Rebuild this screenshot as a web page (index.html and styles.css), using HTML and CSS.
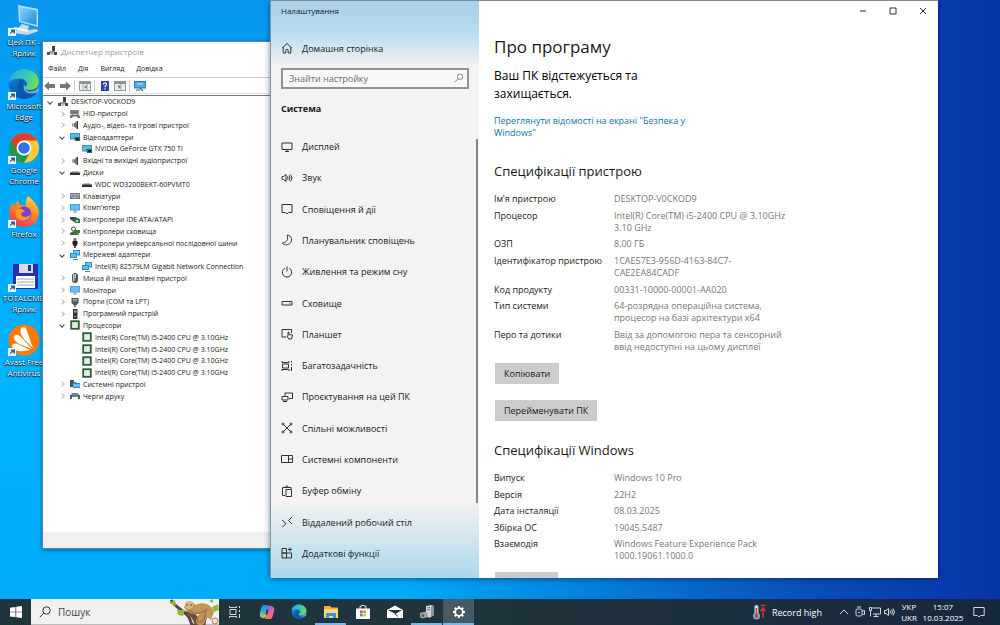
FILE: index.html
```
<!DOCTYPE html>
<html lang="uk">
<head>
<meta charset="utf-8">
<title>Налаштування</title>
<link rel="stylesheet" href="styles.css">
</head>
<body>
<svg class="sprite" aria-hidden="true">
  <defs>
    <linearGradient id="edge-a" x1="0" y1="0" x2="1" y2="0.3"><stop offset="0" stop-color="#2aa8e8"/><stop offset="0.6" stop-color="#35c5c0"/><stop offset="1" stop-color="#6adf5a"/></linearGradient>
    <linearGradient id="edge-b" x1="0" y1="0" x2="0.4" y2="1"><stop offset="0" stop-color="#1d8fe0"/><stop offset="1" stop-color="#0c4da5"/></linearGradient>
    <linearGradient id="fox" x1="0.8" y1="0" x2="0.3" y2="1"><stop offset="0" stop-color="#ffe04a"/><stop offset="0.45" stop-color="#ff8a1f"/><stop offset="1" stop-color="#f2315c"/></linearGradient>
    <linearGradient id="screen" x1="0" y1="0" x2="1" y2="1"><stop offset="0" stop-color="#8fd6ff"/><stop offset="1" stop-color="#1c88d8"/></linearGradient>
    <linearGradient id="cop-a" x1="0" y1="0" x2="0" y2="1"><stop offset="0" stop-color="#2a7cf0"/><stop offset="0.5" stop-color="#2fb8c8"/><stop offset="1" stop-color="#e6c22e"/></linearGradient>
    <linearGradient id="cop-b" x1="0" y1="0" x2="0" y2="1"><stop offset="0" stop-color="#a060f0"/><stop offset="0.5" stop-color="#ee5fa8"/><stop offset="1" stop-color="#f7803a"/></linearGradient>
  </defs>
  <symbol id="edge" viewBox="0 0 32 32">
    <circle cx="16" cy="16" r="15" fill="url(#edge-b)"/>
    <path d="M1 14C2 6 8 1 16 1c9 0 15 6 15 13 0 5-4 8-9 8-3 0-5-1-4-3 2-3 1-7-4-8C8 10 3 12 1 14z" fill="url(#edge-a)"/>
    <path d="M11 13c-3 5-1 13 6 16 5 2 10-1 12-5-8 4-16-1-14-8 0-2 1-3 1-4-2-1-4-1-5 1z" fill="#0c57ae"/>
    <path d="M18 19c-1 3 2 5 6 4 3 0 5-2 7-5l-1 6c-8 4-16 0-14-7z" fill="#e8f6ff" opacity="0.5"/>
  </symbol>
  <symbol id="shortcut" viewBox="0 0 8 8"><rect width="8" height="8" fill="#f4f8fc"/><path d="M2 6.800C1.800 4.500 3 3.200 4.600 3.100H3V1.400h4v4H5.600V4.200C4 4.300 3 5.200 2 6.800z" fill="#1c5fae"/></symbol>
  <symbol id="t-pc" viewBox="0 0 10 10"><rect x="5" y="0" width="3" height="6" fill="#444"/><path d="M2 5h6v2H2z" fill="#999"/><rect x="0" y="6" width="3" height="3" fill="#555"/><rect x="3.500" y="7" width="3" height="2" fill="#bbb"/><rect x="7" y="6" width="3" height="3" fill="#444"/></symbol>
  <symbol id="t-hid" viewBox="0 0 10 10"><rect y="1" width="9" height="4" fill="#8a8f96"/><path d="M1 2h7M1 3.500h7" stroke="#555" stroke-width=".6"/><path d="M0 9c0-5 4-4 5-3 1-1 5-2 5 3H8L7 7.500H3L2 9z" fill="#656a72"/></symbol>
  <symbol id="t-aud" viewBox="0 0 10 10"><path d="M2 3.500h2L7 1v8L4 6.500H2z" fill="#777"/><path d="M7 1h1v8H7z" fill="#333"/><path d="M3 4v2" stroke="#ddd"/></symbol>
  <symbol id="t-vid" viewBox="0 0 10 10"><rect x="0" y="1" width="10" height="6.500" fill="#3b7fb0"/><rect x=".7" y="1.700" width="8.600" height="5" fill="#53baf0"/><path d="M4 5h6v4H5z" fill="#237a42"/><rect x="6" y="6" width="3" height="2" fill="#123"/></symbol>
  <symbol id="t-disk" viewBox="0 0 10 10"><path d="M2 4h6l2 2H0z" fill="#bbb"/><rect y="5.500" width="10" height="2.500" rx=".5" fill="#333"/></symbol>
  <symbol id="t-kbd" viewBox="0 0 10 10"><rect y="2" width="10" height="6" fill="#747c84"/><path d="M1 3.500h8M1 5h8" stroke="#d3d8dc" stroke-width=".8" stroke-dasharray="1 .4"/><path d="M2.500 6.700h5" stroke="#d3d8dc" stroke-width=".7"/></symbol>
  <symbol id="t-mon" viewBox="0 0 10 10"><rect y="1" width="10" height="6.500" fill="#4795cf"/><rect x=".7" y="1.700" width="8.600" height="5" fill="#63c0fa"/><path d="M3 9h4M5 7v2" stroke="#8a98a5"/></symbol>
  <symbol id="t-ide" viewBox="0 0 10 10"><path d="M0 2h5l5 2v3H4L0 4z" fill="#444"/><path d="M3 4h7v4H5z" fill="#2a7a3f"/><rect x="6" y="5" width="2" height="2" fill="#c8d8c8"/></symbol>
  <symbol id="t-sto" viewBox="0 0 10 10"><circle cx="3.500" cy="3" r="2" fill="none" stroke="#444"/><path d="M0 7c3-2 5-2 7-1v3H0z" fill="#555"/><path d="M5 4h5v3H5z" fill="#2b7b41"/><path d="M2 8h7" stroke="#2b7b41" stroke-width="1.500"/></symbol>
  <symbol id="t-usb" viewBox="0 0 10 10"><rect x="3.500" y="0" width="3" height="3" fill="#777"/><path d="M2.500 3h5v3l-1 2h-3l-1-2z" fill="#222"/><path d="M5 7v3" stroke="#222" stroke-width="1.400"/></symbol>
  <symbol id="t-net" viewBox="0 0 10 10"><rect x="3" y="0" width="7" height="5.500" fill="#2581bd"/><rect x="3.800" y=".8" width="5.400" height="3.800" fill="#68c9ff"/><rect x="0" y="3" width="7" height="5" fill="#2581bd"/><rect x=".8" y="3.800" width="5.400" height="3.400" fill="#54c2f6"/><path d="M3 9.500h5" stroke="#3d9a69"/></symbol>
  <symbol id="t-mouse" viewBox="0 0 10 10"><rect x="2" y="0" width="6" height="10" rx="3" fill="#555"/><rect x="3" y="1" width="1.500" height="7" fill="#ccc"/><path d="M5.500 1v4" stroke="#eee" stroke-width=".7"/></symbol>
  <symbol id="t-port" viewBox="0 0 10 10"><path d="M1.500 1h7v5l-2 2h-3l-2-2z" fill="#555"/><path d="M3 2.500h4M3 4h4" stroke="#ccc" stroke-width=".7"/><path d="M5 8v2" stroke="#333" stroke-width="1.400"/></symbol>
  <symbol id="t-soft" viewBox="0 0 10 10"><rect x="3" y="0" width="4.500" height="10" fill="#333"/><rect x="4" y="1.500" width="2.500" height="2" fill="#aaa"/><rect x="4" y="7" width="2.500" height="1" fill="#4bc46a"/></symbol>
  <symbol id="t-cpu" viewBox="0 0 10 10"><rect x="1.200" y="1.200" width="7.600" height="7.600" fill="#e0eedf" stroke="#2e5c3e" stroke-width="1.800"/></symbol>
  <symbol id="t-sys" viewBox="0 0 10 10"><rect x="0" y="1" width="4" height="7" fill="#455"/><path d="M3 3h3l1 1h3v5H3z" fill="#2e89c9"/><path d="M3 5h7v3H3z" fill="#66bff2"/></symbol>
  <symbol id="t-prn" viewBox="0 0 10 10"><path d="M2 2h6l1 2H1z" fill="#7d858d"/><path d="M0 4h10v4H8V6H2v2H0z" fill="#56606a"/><path d="M2 5h6" stroke="#4c9ad6"/></symbol>
</svg>

<div class="desktop">
  <main class="workspace">
    <ul class="shortcuts">
      <li><span class="pic"><svg viewBox="0 0 32 32"><path d="M10 1l20 4v18l-19-5z" fill="#b8dcf2"/><path d="M11.500 3l17 3.500v14.500l-16-4z" fill="url(#screen)"/><path d="M14 20l7 2-1 4 8-1 3 2-12 4-13-2z" fill="#cfd8de"/><path d="M6 24l14 3" stroke="#f5f8fa" stroke-width="2"/></svg><svg class="arrow"><use href="#shortcut"/></svg></span>Цей ПК -<br>Ярлик</li>
      <li><span class="pic"><svg><use href="#edge"/></svg><svg class="arrow"><use href="#shortcut"/></svg></span>Microsoft<br>Edge</li>
      <li><span class="pic"><svg viewBox="0 0 32 32"><circle cx="16" cy="16" r="15" fill="#fcc934"/><path d="M16 16L3 8.500A15 15 0 0 1 29 8.500H16z" fill="#e33b2e"/><path d="M3 8.500A15 15 0 0 0 16 31l6.500-11.500L16 16z" fill="#23984b"/><path d="M3 8.500L9.500 20 16 9z" fill="#e33b2e"/><path d="M3 8.500l6.500 11L16 23 11 29A15 15 0 0 1 3 8.500z" fill="#23984b"/><circle cx="16" cy="16" r="7.500" fill="#fff"/><circle cx="16" cy="16" r="5.800" fill="#2c75e8"/></svg><svg class="arrow"><use href="#shortcut"/></svg></span>Google<br>Chrome</li>
      <li><span class="pic"><svg viewBox="0 0 32 32"><path d="M20 0c5 4 10 9 11 16 0 9-7 15-15 15S1 25 1 17c0-5 2-8 4-11l1 4 4-6 1 5c3 0 5 0 7 1-1-4 0-7 2-10z" fill="url(#fox)"/><circle cx="16" cy="18" r="7.500" fill="#7843cf"/><path d="M8 14c4-3 7-1 9 2-2 0-3 0-4 2 1 4 7 4 10 0-1 6-6 8-11 6-4-2-6-6-4-10z" fill="#ff9725"/></svg><svg class="arrow"><use href="#shortcut"/></svg></span>Firefox</li>
      <li><span class="pic"><svg viewBox="0 0 32 32"><path d="M5 4h25v25H7l-2-2z" fill="#2430b0"/><rect x="11" y="4" width="14" height="9" fill="#d8dde4"/><rect x="20" y="5" width="3" height="6" fill="#2430b0"/><rect x="8" y="16" width="19" height="12" fill="#fff"/><path d="M9 19h17M9 22h17M9 25h17" stroke="#a0a4b0"/></svg><svg class="arrow"><use href="#shortcut"/></svg></span>TOTALCMD<br>Ярлик</li>
      <li><span class="pic"><svg viewBox="0 0 32 32"><circle cx="16" cy="16" r="15.500" fill="#ff7800"/><path d="M13 4c4-2 5 0 6 3l6 17C19 18 10 11 13 4zM6 13c2-4 5-2 7 0l11 12C17 22 5 19 6 13zM4 22c0-3 4-3 6-2l12 6C16 28 5 28 4 22z" fill="#fff"/></svg><svg class="arrow"><use href="#shortcut"/></svg></span>Avast Free<br>Antivirus</li>
    </ul>

    <section class="devmgr">
      <header class="dm-title"><svg class="ico"><use href="#t-pc"/></svg><h2>Диспетчер пристроїв</h2></header>
      <nav class="dm-menu"><button>Файл</button><button>Дія</button><button>Вигляд</button><button>Довідка</button></nav>
      <div class="dm-tools">
        <button aria-label="Назад"><svg viewBox="0 0 12 10"><path d="M0 5l5-4.500v2.500h6v4H5v2.500z" fill="#777"/></svg></button>
        <button aria-label="Вперед"><svg viewBox="0 0 12 10"><path d="M12 5L7 .5V3H1v4h6v2.500z" fill="#777"/></svg></button>
        <i></i>
        <button aria-label="Показати дерево"><svg viewBox="0 0 12 10"><rect x=".5" y=".5" width="11" height="9" fill="#eee" stroke="#999"/><path d="M1 2h10" stroke="#8494a3" stroke-width="2"/><path d="M4 3v6M8 3v6" stroke="#aaa"/><path d="M7.500 4v4L5 6z" fill="#3a9a47"/></svg></button>
        <i></i>
        <button aria-label="Довідка"><svg viewBox="0 0 12 10"><rect x="2" width="8" height="10" fill="#2b46ac"/><path d="M4.500 3.500c0-2.500 3.500-2 3 0C7.300 4.700 6 4.500 6 6.200M6 7.300v1.200" fill="none" stroke="#fff" stroke-width="1.200"/></svg></button>
        <button aria-label="Властивості"><svg viewBox="0 0 12 10"><rect x=".5" y=".5" width="11" height="9" fill="#eee" stroke="#999"/><path d="M1 2h10" stroke="#8494a3" stroke-width="2"/><path d="M7 3v6M3 5h3" stroke="#aaa"/><path d="M4.500 4v4L7 6z" fill="#3a9a47"/></svg></button>
        <i></i>
        <button aria-label="Оновити"><svg viewBox="0 0 12 10"><rect x=".5" y=".5" width="11" height="6.500" fill="#48aeea" stroke="#2b7fb4"/><path d="M3 3h6" stroke="#b8e6ff"/><path d="M6 7l3 3M2 9h4" stroke="#456" stroke-width="1.200"/></svg></button>
      </div>
      <div class="dm-body">
        <ul class="tree">
          <li class="l0 open"><svg class="ico"><use href="#t-pc"/></svg>DESKTOP-V0CKOD9</li>
          <li class="l1 shut"><svg class="ico"><use href="#t-hid"/></svg>HID-пристрої</li>
          <li class="l1 shut"><svg class="ico"><use href="#t-aud"/></svg>Аудіо-, відео- та ігрові пристрої</li>
          <li class="l1 open"><svg class="ico"><use href="#t-vid"/></svg>Відеоадаптери</li>
          <li class="l2"><svg class="ico"><use href="#t-vid"/></svg>NVIDIA GeForce GTX 750 Ti</li>
          <li class="l1 shut"><svg class="ico"><use href="#t-aud"/></svg>Вхідні та вихідні аудіопристрої</li>
          <li class="l1 open"><svg class="ico"><use href="#t-disk"/></svg>Диски</li>
          <li class="l2"><svg class="ico"><use href="#t-disk"/></svg>WDC WD3200BEKT-60PVMT0</li>
          <li class="l1 shut"><svg class="ico"><use href="#t-kbd"/></svg>Клавіатури</li>
          <li class="l1 shut"><svg class="ico"><use href="#t-mon"/></svg>Комп'ютер</li>
          <li class="l1 shut"><svg class="ico"><use href="#t-ide"/></svg>Контролери IDE ATA/ATAPI</li>
          <li class="l1 shut"><svg class="ico"><use href="#t-sto"/></svg>Контролери сховища</li>
          <li class="l1 shut"><svg class="ico"><use href="#t-usb"/></svg>Контролери універсальної послідовної шини</li>
          <li class="l1 open"><svg class="ico"><use href="#t-net"/></svg>Мережеві адаптери</li>
          <li class="l2"><svg class="ico"><use href="#t-net"/></svg>Intel(R) 82579LM Gigabit Network Connection</li>
          <li class="l1 shut"><svg class="ico"><use href="#t-mouse"/></svg>Миша й інші вказівні пристрої</li>
          <li class="l1 shut"><svg class="ico"><use href="#t-mon"/></svg>Монітори</li>
          <li class="l1 shut"><svg class="ico"><use href="#t-port"/></svg>Порти (COM та LPT)</li>
          <li class="l1 shut"><svg class="ico"><use href="#t-soft"/></svg>Програмний пристрій</li>
          <li class="l1 open"><svg class="ico"><use href="#t-cpu"/></svg>Процесори</li>
          <li class="l2"><svg class="ico"><use href="#t-cpu"/></svg>Intel(R) Core(TM) i5-2400 CPU @ 3.10GHz</li>
          <li class="l2"><svg class="ico"><use href="#t-cpu"/></svg>Intel(R) Core(TM) i5-2400 CPU @ 3.10GHz</li>
          <li class="l2"><svg class="ico"><use href="#t-cpu"/></svg>Intel(R) Core(TM) i5-2400 CPU @ 3.10GHz</li>
          <li class="l2"><svg class="ico"><use href="#t-cpu"/></svg>Intel(R) Core(TM) i5-2400 CPU @ 3.10GHz</li>
          <li class="l1 shut"><svg class="ico"><use href="#t-sys"/></svg>Системні пристрої</li>
          <li class="l1 shut"><svg class="ico"><use href="#t-prn"/></svg>Черги друку</li>
        </ul>
      </div>
      <footer class="dm-status"></footer>
    </section>

    <section class="settings">
      <aside class="side">
        <span class="app-name">Налаштування</span>
        <a class="item home" href="#"><svg viewBox="0 0 12 12"><path d="M1 6.200L6 1.500l5 4.700M2.200 5.200V11h2.600V8.500a1.200 1.200 0 0 1 2.400 0V11h2.600V5.200"/></svg>Домашня сторінка</a>
        <div class="find"><input type="text" placeholder="Знайти настройку" aria-label="Знайти настройку"><svg viewBox="0 0 12 12"><circle cx="7.300" cy="4.500" r="3.200"/><path d="M5 7L1 11"/></svg></div>
        <h2>Система</h2>
        <nav class="menu">
          <a class="item" href="#"><svg viewBox="0 0 12 12"><path d="M1 2h10v6.500H1zM4 10.500h4M6 8.500v2"/></svg>Дисплей</a>
          <a class="item" href="#"><svg viewBox="0 0 12 12"><path d="M1 4.500h1.500L5 2.500v7L2.500 7.500H1zM6.500 4.500q1 1.500 0 3M8 3.500q2 2.500 0 5M9.500 2.500q3 3.500 0 7"/></svg>Звук</a>
          <a class="item" href="#"><svg viewBox="0 0 12 12"><path d="M1 1.500h10v8H7.500L6 11 4.500 9.500H1z"/></svg>Сповіщення й дії</a>
          <a class="item" href="#"><svg viewBox="0 0 12 12"><path d="M6 1c5 .5 6 6 2.500 8.700C6 11.500 2.500 11 1.200 9 5 9 8 5.500 6 1z"/></svg>Планувальник сповіщень</a>
          <a class="item" href="#"><svg viewBox="0 0 12 12"><path d="M3.800 2.200a4.700 4.700 0 1 0 4.400 0M6 .5v5"/></svg>Живлення та режим сну</a>
          <a class="item" href="#"><svg viewBox="0 0 12 12"><path d="M1 4.500h10v3.500H1zM8.500 6.300h1"/></svg>Сховище</a>
          <a class="item" href="#"><svg viewBox="0 0 12 12"><path d="M5 9H1V1.500h9.500V5M6 8.500l2 2.500h2.500L11.500 7 8 6.500V4.200H7V8z"/></svg>Планшет</a>
          <a class="item" href="#"><svg viewBox="0 0 12 12"><path d="M1 1v1.500h7V1M1 11V9.500h7V11M1.500 4.500v3M1.500 4h6v4h-6zM10.500 1v1.500M10.500 4v1.500M10.500 7v4"/></svg>Багатозадачність</a>
          <a class="item" href="#"><svg viewBox="0 0 12 12"><path d="M4 5V2h7.500v5.500H8M1 5.500h6V9H1zM2 10.500h4"/></svg>Проєктування на цей ПК</a>
          <a class="item" href="#"><svg viewBox="0 0 12 12"><path d="M2.500 2.500l7 7M9.500 2.500l-7 7"/><circle cx="2" cy="2" r="1"/><circle cx="10" cy="2" r="1"/><circle cx="2" cy="10" r="1"/><circle cx="10" cy="10" r="1"/></svg>Спільні можливості</a>
          <a class="item" href="#"><svg viewBox="0 0 12 12"><path d="M.5 2.500h11v7H.5zM7.500 2.500v7M7.500 6h4"/></svg>Системні компоненти</a>
          <a class="item" href="#"><svg viewBox="0 0 12 12"><path d="M4 10.500H1.500v-8H10V4M4 2.500q1.800-3.500 3.500 0M5 4.500h5.500v7H5z"/></svg>Буфер обміну</a>
          <a class="item" href="#"><svg viewBox="0 0 12 12"><path d="M1 4l4 3.500L1.500 11M11 1L7.500 4.500 11 8"/></svg>Віддалений робочий стіл</a>
          <a class="item" href="#"><svg viewBox="0 0 12 12"><path d="M1 1.500h4.500v4.500H1zM1 6h4.500v5H1zM5.500 6h5v5h-5zM9 .5v4M7 2.500h4"/></svg>Додаткові функції</a>
        </nav>
        <span class="thumb"></span>
      </aside>
      <div class="about">
        <div class="win-btns">
          <button aria-label="Згорнути"><svg viewBox="0 0 8 8"><path d="M1 4h6"/></svg></button>
          <button aria-label="Розгорнути"><svg viewBox="0 0 8 8"><path d="M1 1h6v6H1z"/></svg></button>
          <button aria-label="Закрити"><svg viewBox="0 0 8 8"><path d="M1 1l6 6M7 1L1 7"/></svg></button>
        </div>
        <h1>Про програму</h1>
        <p class="lead">Ваш ПК відстежується та захищається.</p>
        <a class="security" href="#">Переглянути відомості на екрані "Безпека у Windows"</a>
        <h3>Специфікації пристрою</h3>
        <table class="spec device">
          <tr><th scope="row">Ім’я пристрою</th><td>DESKTOP-V0CKOD9</td></tr>
          <tr><th scope="row">Процесор</th><td>Intel(R) Core(TM) i5-2400 CPU @ 3.10GHz<br>3.10 GHz</td></tr>
          <tr><th scope="row">ОЗП</th><td>8,00 ГБ</td></tr>
          <tr><th scope="row">Ідентифікатор пристрою</th><td>1CAE57E3-956D-4163-84C7-<br>CAE2EA84CADF</td></tr>
          <tr><th scope="row">Код продукту</th><td>00331-10000-00001-AA020</td></tr>
          <tr><th scope="row">Тип системи</th><td>64-розрядна операційна система,<br>процесор на базі архітектури x64</td></tr>
          <tr><th scope="row">Перо та дотики</th><td>Ввід за допомогою пера та сенсорний<br>ввід недоступні на цьому дисплеї</td></tr>
        </table>
        <button class="btn">Копіювати</button>
        <button class="btn">Перейменувати ПК</button>
        <h3 class="second">Специфікації Windows</h3>
        <table class="spec windows">
          <tr><th scope="row">Випуск</th><td>Windows 10 Pro</td></tr>
          <tr><th scope="row">Версія</th><td>22H2</td></tr>
          <tr><th scope="row">Дата інсталяції</th><td>08.03.2025</td></tr>
          <tr><th scope="row">Збірка ОС</th><td>19045.5487</td></tr>
          <tr><th scope="row">Взаємодія</th><td>Windows Feature Experience Pack<br>1000.19061.1000.0</td></tr>
        </table>
        <button class="btn clipped" aria-label="Копіювати"></button>
      </div>
    </section>
  </main>

  <footer class="taskbar">
    <button class="start" aria-label="Пуск"><svg viewBox="0 0 12 12"><path d="M0 1.700l5.500-.8v4.800H0zM6.200.8L12 0v5.700H6.200zM0 6.300h5.500v4.900L0 10.400zM6.200 6.300H12V12l-5.800-.8z" fill="#fff"/></svg></button>
    <label class="search">
      <svg class="lens" viewBox="0 0 12 12"><circle cx="7.500" cy="4.500" r="3.700"/><path d="M4.800 7.200L.8 11.200"/></svg>
      <input type="text" placeholder="Пошук" aria-label="Пошук">
      <svg class="sloth" viewBox="0 0 50 26"><path d="M2 1c5 8 12 10 18 17l3 8h12c0-8 3-11 8-14" fill="none" stroke="#5c4638" stroke-width="3"/><path d="M14 12c6 2 10 8 12 14h8c-4-10-10-14-20-14z" fill="#6a4d3c"/><path d="M15 8c3-7 9-7 11-2 8-4 16-1 19 7l-3 8-4-3-3 7c-4 3-9 0-8-4l3-6c-5 1-11 0-15-7z" fill="#c39459"/><path d="M20 11c5 5 12 4 17 0l-2 9c-3 5-9 3-6-2" fill="none" stroke="#a27440" stroke-width="1.500"/><circle cx="20" cy="6" r="4" fill="#dcb783"/><path d="M17 6h2M21 6h2" stroke="#543" stroke-width="1"/><path d="M0 4l6-3 1 6zM8 11l8 0-2 6-5-1zM43 8l6-3 1 6-5 2zM40 2l4-2v4z" fill="#8bbd35"/><circle cx="46" cy="22" r="3" fill="#f2dfd0" stroke="#bd7a54"/></svg>
    </label>
    <div class="apps">
      <button aria-label="Подання завдань"><svg viewBox="0 0 14 14" class="line"><path d="M1.500 1v1.500h7V1M1.500 13v-1.500h7V13M2 4.500h6v5H2zM11.500 1v2M11.500 5v2M11.500 9v4"/></svg></button>
      <button aria-label="Copilot"><svg viewBox="0 0 16 16"><path d="M5 1h5L7 12c-.5 2-2 2.500-3.500 2C0 13 .5 10 1.500 6.500 2.500 3 3 1 5 1z" fill="url(#cop-a)"/><path d="M11 15H6L9 4c.5-2 2-2.500 3.500-2C16 3 15.500 6 14.500 9.500 13.500 13 13 15 11 15z" fill="url(#cop-b)"/><path d="M7.500 5.500h2L8.500 10.500h-2z" fill="#263b45"/></svg></button>
      <button aria-label="Edge"><svg><use href="#edge"/></svg></button>
      <button class="running" aria-label="Провідник"><svg viewBox="0 0 16 16"><path d="M1 2h6l1.500 1.500H15V14H1z" fill="#e9b33e"/><path d="M1 5h14v9H1z" fill="#fbd675"/><path d="M3 9h10v5h-3v-2H6v2H3z" fill="#3694dc"/></svg></button>
      <button aria-label="Store"><svg viewBox="0 0 16 16"><path d="M5 5V3q3-3.500 6 0v2" fill="none" stroke="#cfdbe2" stroke-width="1.200"/><path d="M1 4.500h14V15H1z" fill="#fff"/><path d="M5 6.500h2.700v2.700H5z" fill="#e8502a"/><path d="M8.300 6.500H11v2.700H8.300z" fill="#78b72a"/><path d="M5 9.800h2.700v2.700H5z" fill="#269fe0"/><path d="M8.300 9.800H11v2.700H8.300z" fill="#f7b81b"/></svg></button>
      <button aria-label="Пошта"><svg viewBox="0 0 16 16"><path d="M0 6l8-4.500L16 6v8H0z" fill="#fff"/><path d="M1 6h14l-6.500 4z" fill="#23353e"/><path d="M8 10l3 2.500" stroke="#23353e"/></svg></button>
      <button class="running" aria-label="Диспетчер пристроїв"><svg viewBox="0 0 16 16"><path d="M7 2l6-1 2 2v8l-5 3-3-3z" fill="#d3d6d8"/><path d="M13 1l2 2v8l-3 2V4z" fill="#8c9296"/><path d="M1 9l6-1.500 2 2V13l-6 1.500L1 13z" fill="#a5aaad"/><circle cx="4" cy="11.500" r="1.500" fill="#4b5459"/><path d="M8 4l3-.5M8 6l3-.5" stroke="#777"/></svg></button>
      <button class="running active" aria-label="Налаштування"><svg viewBox="0 0 16 16"><circle cx="8" cy="8" r="3.800" fill="none" stroke="#fff" stroke-width="1.800"/><path d="M8 2v2M8 12v2M2 8h2M12 8h2M3.800 3.800l1.400 1.400M10.800 10.800l1.400 1.400M12.200 3.800l-1.400 1.400M5.200 10.800l-1.400 1.400" stroke="#fff" stroke-width="2"/></svg></button>
    </div>
    <div class="tray">
      <button class="weather"><svg viewBox="0 0 14 16"><rect x="2.500" y="1" width="4" height="10" rx="2" fill="#b7dcf5"/><circle cx="4.500" cy="12" r="3.500" fill="#68b6ee"/><circle cx="4.500" cy="12" r="2" fill="#e23b35"/><path d="M4.500 4v8" stroke="#e23b35" stroke-width="1.500"/><path d="M8.500 1.500h5M11 14V4M8.500 7L11 4l2.500 3" fill="none" stroke="#d6332f" stroke-width="1.500"/></svg>Record high</button>
      <button class="t more" aria-label="Приховані піктограми"><svg viewBox="0 0 12 12"><path d="M2 8l4-4 4 4"/></svg></button>
      <button class="t" aria-label="Камера"><svg viewBox="0 0 12 12"><rect x="2" y="3" width="6" height="7" rx="1.500"/><path d="M3 1h4M8 5l2.500-.5v4L8 8"/><circle cx="5" cy="6.500" r=".5"/></svg></button>
      <button class="t" aria-label="Мережа"><svg viewBox="0 0 12 12"><path d="M3 2h8.500v6H4M7 8v2.500M4.500 10.500h5M.5 1.500h2v3h-2zM1.500 4.500v6"/></svg></button>
      <button class="t" aria-label="Гучність"><svg viewBox="0 0 12 12"><path d="M.5 4.500H2L4.500 2.500v7L2 7.500H.5zM6 4.500q1 1.500 0 3M7.500 3.500q2 2.500 0 5M9 2.500q3 3.500 0 7"/></svg></button>
      <button class="lang">УКР<br>UKR</button>
      <button class="clock">15:07<br>10.03.2025</button>
      <button class="note" aria-label="Сповіщення"><svg viewBox="0 0 12 12"><path d="M.8 1.500h10.400v8H7.500L6 11 4.500 9.500H.8z"/></svg></button>
    </div>
  </footer>
</div>
</body>
</html>
```
FILE: styles.css
```
* { box-sizing: border-box; }
body {
  margin: 0;
  font-family: "Open Sans", "Noto Sans", sans-serif;
  font-size: 9px;
  color: #1a1a1a;
}
ul { list-style: none; margin: 0; padding: 0; }
h1, h2, h3, p { margin: 0; font-weight: 400; }
button { font: inherit; color: inherit; border: 0; padding: 0; background: none; }
a { color: inherit; text-decoration: none; }
svg { display: block; flex: none; }
.sprite { position: absolute; width: 0; height: 0; }

.desktop {
  height: 100vh;
  display: flex;
  flex-direction: column;
  overflow: hidden;
  background: linear-gradient(90deg, rgba(0, 150, 230, 0) 40%, #0a50bc 80%, #083cae 94%, #0734a4 100%), linear-gradient(180deg, #0898ee 0, #00a8fa 30%, #00b3ff 60%, #00aaf8 100%);
}
.workspace { flex: 1; min-height: 0; position: relative; }

/* Desktop shortcuts */
.shortcuts { display: flex; flex-direction: column; width: 48px; padding-top: 4px; }
.shortcuts li {
  height: 64px;
  display: block;
  text-align: center;
  white-space: nowrap;
  font-size: 8px;
  line-height: 11px;
  color: #fff;
  text-shadow: 0 1px 1px #000, 0 0 2px #003;
}
.pic { display: block; width: 32px; height: 32px; margin: 0 auto; position: relative; }
.pic svg { width: 32px; height: 32px; }
.pic .arrow { position: absolute; left: 0; bottom: 0; width: 8px; height: 8px; }

/* Device manager */
.devmgr {
  position: absolute;
  left: 42px;
  top: 41px;
  right: 60%;
  bottom: 50px;
  display: flex;
  flex-direction: column;
  background: #fff;
  border: 1px solid #4b88ac;
  box-shadow: 0 1px 4px rgba(0, 20, 60, .5);
  font-size: 7px;
}
.ico { width: 10px; height: 10px; }
.dm-title { display: flex; align-items: center; gap: 4px; height: 18px; padding-left: 4px; }
.dm-title h2 { font-size: 8px; color: #999; }
.dm-menu { display: flex; gap: 12px; height: 17px; padding-left: 5px; align-items: center; }
.dm-tools { display: flex; align-items: center; gap: 1px; height: 17px; border-top: 1px solid #ccc; border-bottom: 1px solid #e0e0e0; }
.dm-tools svg { width: 12px; height: 10px; margin: 0 1px; }
.dm-tools i { width: 1px; height: 12px; background: #ccc; margin: 0 2px 0 1px; }
.dm-body { flex: 1; min-height: 0; margin-top: 1px; border-top: 1px solid #777; }
.tree { height: 306px; display: grid; grid-auto-rows: 1fr; }
.tree li { display: flex; align-items: center; gap: 3px; white-space: nowrap; }
.tree li::before { content: ""; width: 3px; height: 3px; flex: none; border: solid #bbb; border-width: 1px 1px 0 0; margin-right: 3px; }
.tree .shut::before { transform: rotate(45deg); }
.tree .open::before { transform: rotate(135deg); border-color: #444; }
.tree .l2::before { visibility: hidden; }
.tree .l0 { padding-left: 5px; }
.tree .l1 { padding-left: 17px; }
.tree .l2 { padding-left: 29px; }
.dm-status { height: 16px; background: #f0f0f0; }

/* Settings window */
.settings {
  position: absolute;
  left: 270px;
  top: 0;
  right: 62px;
  bottom: 21px;
  display: grid;
  grid-template-columns: 208px 1fr;
  background: #fff;
  border-top: 1px solid #85888f;
  border-left: 1px solid #7d97a5;
  box-shadow: 0 1px 6px rgba(0, 10, 60, .5);
  overflow: hidden;
}
.side {
  position: relative;
  display: flex;
  flex-direction: column;
  padding: 0 10px 9px;
  background: linear-gradient(180deg, #a9cfe8 0, #b8daee 30px, #f3f3f3 66px, #f3f3f3 500px, #add7ea 100%);
}
.app-name { font-size: 8px; line-height: 20px; }
.item { display: flex; align-items: center; gap: 9px; white-space: nowrap; }
.item svg { width: 12px; height: 12px; fill: none; stroke: #333; stroke-width: 1; }
.home { height: 36px; margin-top: 9px; }
.find { position: relative; margin-top: 2px; }
.find input {
  width: 100%;
  height: 21px;
  border: 2px solid #8f9498;
  background: #f8f8f8;
  padding: 0 6px;
  font: inherit;
}
.find input::placeholder, .search input::placeholder { color: #6a6a6a; opacity: 1; }
.find svg { position: absolute; right: 5px; top: 5px; width: 10px; height: 10px; fill: none; stroke: #777; }
.side h2 { font-size: 9px; font-weight: 700; line-height: 40px; }
.menu { flex: 1; min-height: 0; display: flex; flex-direction: column; margin-top: 2px; }
.menu .item { flex: 1; }
.thumb { position: absolute; right: 1px; top: 24%; bottom: 13%; width: 2px; background: #858585; }

.about { padding-left: 15px; position: relative; overflow: hidden; }
.win-btns { display: flex; justify-content: flex-end; height: 20px; }
.win-btns button { width: 30px; display: grid; place-items: center; }
.win-btns svg { width: 8px; height: 8px; fill: none; stroke: #333; }
.about h1 { font-size: 17px; line-height: 24px; margin-top: 14px; }
.lead { font-size: 12px; line-height: 18px; margin-top: 8px; max-width: 160px; color: #000; }
.security { display: block; max-width: 200px; line-height: 12px; margin-top: 12px; color: #1173a5; }
.about h3 { font-size: 13px; line-height: 18px; margin-top: 23px; }
.spec { border-collapse: collapse; line-height: 12px; margin-top: 11px; }
.spec.device { height: 165px; }
.spec.windows { height: 95px; }
.spec th { width: 120px; padding: 2px 0; text-align: left; font-weight: 400; vertical-align: top; white-space: nowrap; }
.spec td { padding: 2px 0; color: #777; vertical-align: top; white-space: nowrap; }
.btn { display: block; height: 21px; padding: 0 9px; background: #ccc; margin: 16px 0 0 1px; }
.spec + .btn { margin-top: 7px; }
.about .second { margin-top: 20px; }
.btn.clipped { width: 63px; }

/* Taskbar */
.taskbar {
  flex: none;
  height: 26px;
  display: flex;
  color: #fff;
  background: linear-gradient(90deg, #20343d 0, #20343d 50%, #16283c 100%);
}
.start { width: 31px; display: grid; place-items: center; }
.start svg { width: 12px; height: 12px; }
.search { width: 188px; display: flex; align-items: center; gap: 7px; padding-left: 8px; background: #f1f1f1; border-bottom: 1px solid #bbb; }
.search input { flex: 1; min-width: 0; border: 0; padding: 0; background: none; font: inherit; font-size: 10px; }
.search input::placeholder { color: #444; }
.lens { width: 12px; height: 12px; fill: none; stroke: #333; }
.sloth { width: 50px; height: 26px; }
.apps { display: flex; gap: 1px; }
.apps button { width: 31px; display: grid; place-items: center; border-bottom: 2px solid transparent; border-top: 2px solid transparent; }
.apps svg { width: 16px; height: 16px; }
.apps .line { fill: none; stroke: #d0d6d9; width: 14px; height: 14px; }
.apps .running { border-bottom-color: #76b9ed; }
.apps .active { background: #475a64; border-top-color: #475a64; }
.tray { margin-left: auto; display: flex; align-items: center; line-height: 11px; font-size: 8px; }
.tray svg { width: 12px; height: 12px; fill: none; stroke: #d2d8de; stroke-width: 1; }
.tray .weather { display: flex; align-items: center; gap: 6px; font-size: 9px; margin-right: 13px; }
.weather svg { width: 14px; height: 16px; stroke: none; }
.t { width: 15px; display: grid; place-items: center; }
.tray .more { width: 17px; }
.lang { width: 24px; }
.clock { width: 44px; }
.note { width: 27px; display: grid; place-items: center; margin-right: 8px; }
```
